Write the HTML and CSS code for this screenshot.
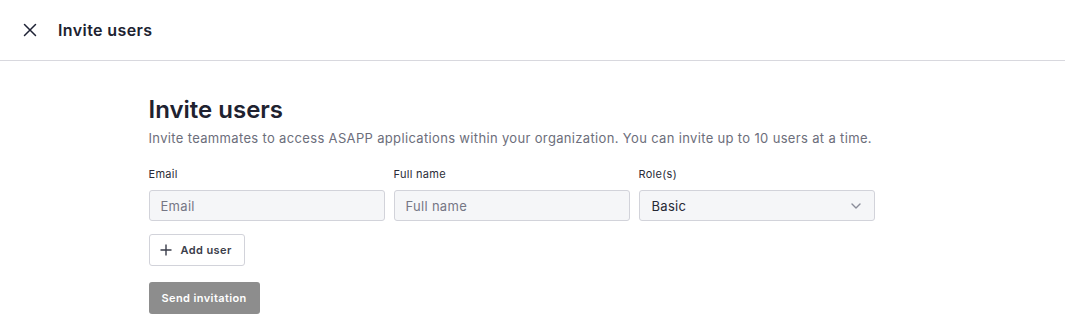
FILE: index.html
```html
<html lang="en">
<head>
    <meta charset="UTF-8">
    <title>Invite users</title>
    <link rel="stylesheet" href="styles.css">
</head>
<body>
    <header class="top-bar">
        <button class="close-btn" aria-label="Close">
            <svg width="14" height="14" viewBox="0 0 14 14"><path d="M1.5 1.5L12.5 12.5M12.5 1.5L1.5 12.5" stroke="#1e2235" stroke-width="1.5" stroke-linecap="round"/></svg>
        </button>
        <span class="top-title">Invite users</span>
    </header>

    <main class="content">
        <h1>Invite users</h1>
        <p class="subtitle">Invite teammates to access ASAPP applications within your organization. You can invite up to 10 users at a time.</p>

        <div class="user-row">
            <div class="field">
                <label>Email</label>
                <input type="text" placeholder="Email">
            </div>
            <div class="field">
                <label>Full name</label>
                <input type="text" placeholder="Full name">
            </div>
            <div class="field">
                <label>Role(s)</label>
                <div class="select">
                    <span>Basic</span>
                    <svg width="12" height="8" viewBox="0 0 12 8"><path d="M2 2L6 6L10 2" stroke="#8a8d99" stroke-width="1.4" fill="none" stroke-linecap="round" stroke-linejoin="round"/></svg>
                </div>
            </div>
        </div>

        <button class="add-btn">
            <svg width="12" height="12" viewBox="0 0 12 12"><path d="M6 0.5V11.5M0.5 6H11.5" stroke="#3a3d4a" stroke-width="1.4"/></svg>
            Add user
        </button>

        <button class="send-btn" disabled>Send invitation</button>
    </main>
</body>
</html>
```

FILE: styles.css
```css
body {
    font-family: 'Inter', 'Liberation Sans', sans-serif;
    background-color: #fff;
    margin: 0;
    padding: 0;
    color: #202230;
}

.top-bar {
    height: 61px;
    display: flex;
    align-items: center;
    border-bottom: 1px solid #d8d8de;
    padding-left: 23px;
    box-sizing: border-box;
}

.close-btn {
    background: none;
    border: none;
    padding: 0;
    width: 14px;
    height: 14px;
    display: flex;
    cursor: pointer;
    margin-right: 21px;
}

.top-title {
    font-size: 16px;
    font-weight: 600;
    letter-spacing: 0.4px;
    color: #202230;
}

.content {
    width: 768px;
    margin: 0 auto;
    padding-top: 34px;
}

h1 {
    font-size: 24px;
    font-weight: 600;
    margin: 0;
    line-height: 30px;
    color: #202230;
}

.subtitle {
    font-size: 13px;
    letter-spacing: 0.34px;
    color: #6c6e7b;
    margin: 4px 0 0;
    line-height: 18px;
}

.user-row {
    display: flex;
    gap: 9px;
    margin-top: 20px;
}

.field {
    display: flex;
    flex-direction: column;
    width: 236px;
}

label {
    font-size: 11px;
    letter-spacing: 0.3px;
    color: #2a2c38;
    line-height: 14px;
    margin-bottom: 9px;
}

input, .select {
    height: 31px;
    box-sizing: border-box;
    border: 1px solid #d2d3da;
    border-radius: 3px;
    background: #f5f6f8;
    font-family: inherit;
    font-size: 13px;
    letter-spacing: 0.3px;
    padding: 0 11px;
    color: #202230;
}

input::placeholder {
    color: #757785;
}

.select {
    display: flex;
    align-items: center;
    justify-content: space-between;
    padding: 0 12px 0 12px;
    color: #262834;
}

.add-btn {
    display: flex;
    align-items: center;
    gap: 9px;
    margin-top: 13px;
    height: 32px;
    padding: 0 12px 0 10px;
    background: #fff;
    border: 1px solid #d2d3da;
    border-radius: 3px;
    font-family: inherit;
    font-size: 11px;
    font-weight: 600;
    letter-spacing: 0.4px;
    color: #3a3d4a;
    cursor: pointer;
}

.send-btn {
    display: block;
    margin-top: 16px;
    height: 32px;
    padding: 0 13px;
    background: #8d8d8d;
    border: none;
    border-radius: 3px;
    font-family: inherit;
    font-size: 11px;
    font-weight: 600;
    letter-spacing: 0.4px;
    color: #fff;
}
```
